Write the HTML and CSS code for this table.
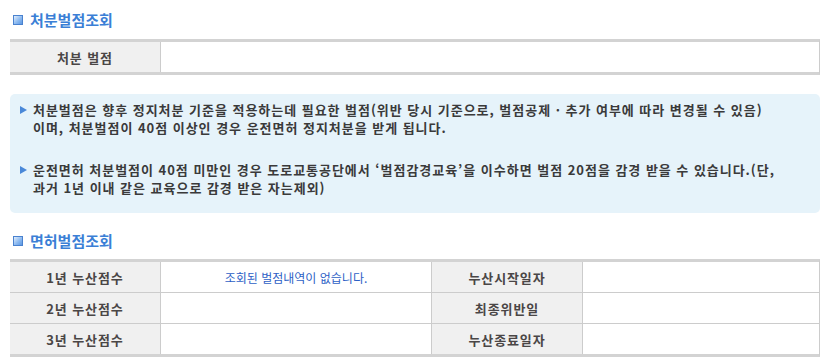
FILE: index.html
```html
<!DOCTYPE html>
<html lang="ko">
<head>
<meta charset="utf-8">
<title>벌점조회</title>
<link rel="stylesheet" href="styles.css">
</head>
<body>
<h2 class="title"><span class="title-icon"></span>처분벌점조회</h2>
<div class="grid grid-one">
  <div class="label">처분 벌점</div>
  <div class="value last-col"></div>
</div>

<div class="notice">
  <p class="note">처분벌점은 향후 정지처분 기준을 적용하는데 필요한 벌점(위반 당시 기준으로, 벌점공제 · 추가 여부에 따라 변경될 수 있음)<br>이며, 처분벌점이 40점 이상인 경우 운전면허 정지처분을 받게 됩니다.</p>
  <p class="note">운전면허 처분벌점이 40점 미만인 경우 도로교통공단에서 ‘벌점감경교육’을 이수하면 벌점 20점을 감경 받을 수 있습니다.(단,<br>과거 1년 이내 같은 교육으로 감경 받은 자는제외)</p>
</div>

<h2 class="title title-second"><span class="title-icon"></span>면허벌점조회</h2>
<div class="grid grid-four">
  <div class="label">1년 누산점수</div>
  <div class="value empty-msg">조회된 벌점내역이 없습니다.</div>
  <div class="label">누산시작일자</div>
  <div class="value last-col"></div>

  <div class="label row-line">2년 누산점수</div>
  <div class="value row-line"></div>
  <div class="label row-line">최종위반일</div>
  <div class="value row-line last-col"></div>

  <div class="label row-line">3년 누산점수</div>
  <div class="value row-line"></div>
  <div class="label row-line">누산종료일자</div>
  <div class="value row-line last-col"></div>
</div>
</body>
</html>
```

FILE: styles.css
```css
* { box-sizing: border-box; }

body {
  margin: 0;
  padding: 10px 11px 0 10px;
  font-family: "Noto Sans CJK KR", "Noto Sans", sans-serif;
  background: #fff;
  color: #444;
}

.title {
  margin: 0;
  height: 20px;
  line-height: 20px;
  font-size: 15px;
  font-weight: bold;
  color: #3b7fd6;
  display: flex;
  align-items: center;
  padding-left: 3px;
  letter-spacing: 0;
}

.title-icon {
  width: 10px;
  height: 10px;
  margin-right: 7px;
  border: 1px solid #4a82cf;
  background: linear-gradient(135deg, #e2eefc 0%, #8dbaf0 55%, #5b97e2 100%);
  flex: none;
}

.grid {
  display: grid;
  border-top: 3px solid #d3d3d3;
  border-bottom: 3px solid #d3d3d3;
  border-right: 1px solid #cccccc;
  margin-top: 9px;
}

.grid-one { grid-template-columns: 151px 1fr; }
.grid-four { grid-template-columns: 151px 271px 151px 1fr; margin-top: 8px; }

.label, .value {
  height: 30px;
  display: flex;
  align-items: center;
  justify-content: center;
}

.label {
  background: #f0f0f0;
  border-right: 1px solid #cccccc;
  font-size: 13px;
  font-weight: bold;
  color: #4a4646;
  letter-spacing: 0.9px;
}

.value {
  background: #fff;
  border-right: 1px solid #cccccc;
}

.value.last-col { border-right: 0; }

.row-line {
  height: 31px;
  border-top: 1px solid #cccccc;
}

.empty-msg {
  font-size: 12px;
  color: #2d5fc6;
}

.notice {
  margin-top: 19px;
  background: #e6f3fa;
  border-radius: 5px;
  padding: 7px 10px 16px 23px;
}

.note {
  position: relative;
  margin: 0;
  font-size: 13px;
  font-weight: bold;
  line-height: 18px;
  color: #3a3a3a;
  letter-spacing: 0.97px;
  white-space: nowrap;
}

.note + .note { margin-top: 24px; }

.note::before {
  content: "";
  position: absolute;
  left: -13px;
  top: 5px;
  border-left: 7px solid #4a88d8;
  border-top: 4px solid transparent;
  border-bottom: 4px solid transparent;
}

.title-second { margin-top: 18px; }
```
